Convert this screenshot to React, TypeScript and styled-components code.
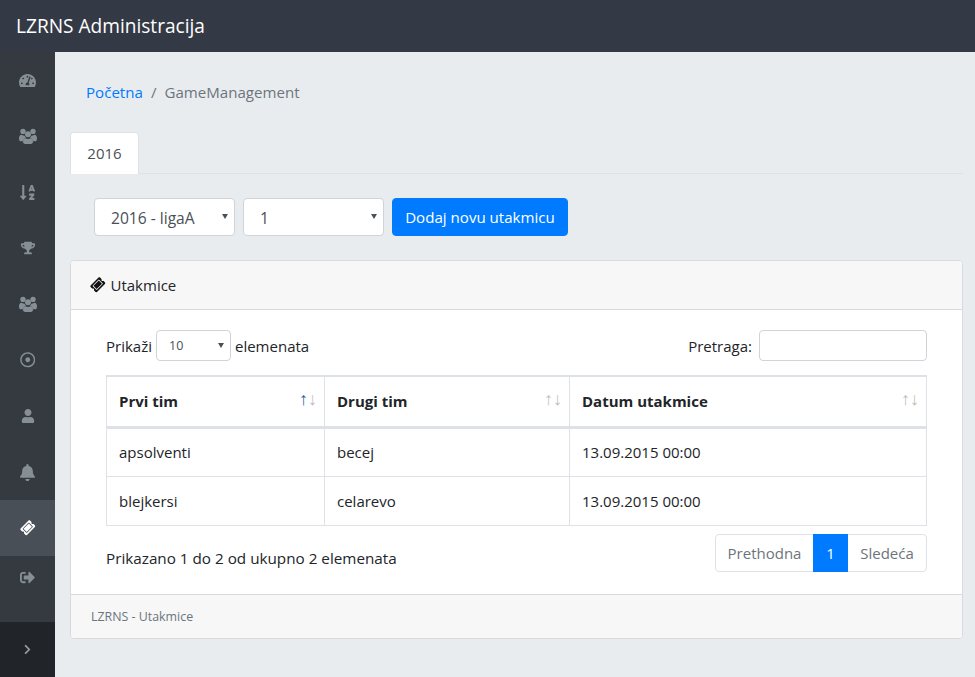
import styled, { createGlobalStyle } from "styled-components";
import {
  FaTachometerAlt,
  FaSortAlphaDown,
  FaTrophy,
  FaRegDotCircle,
  FaUser,
  FaBell,
  FaTicketAlt,
  FaSignOutAlt,
  FaChevronRight,
} from "react-icons/fa";

const GlobalStyle = createGlobalStyle`
  * {
    box-sizing: border-box;
  }
  html, body {
    margin: 0;
    height: 100%;
    background: #e9ecef;
    overflow: hidden;
  }
  body {
    font-family: "Open Sans", "Noto Sans", sans-serif;
    font-size: 15px;
    color: #212529;
  }
`;

const Page = styled.div`
  width: 975px;
  height: 677px;
  display: flex;
  flex-direction: column;
`;

const Header = styled.header`
  height: 52px;
  flex: none;
  background: #343a45;
  color: #fff;
  font-size: 19.1px;
  line-height: 52px;
  padding-left: 16px;
`;

const Body = styled.div`
  flex: 1;
  display: flex;
  min-height: 0;
`;

const Sidebar = styled.nav`
  width: 55px;
  flex: none;
  display: flex;
  flex-direction: column;
  background: #343a40;
`;

const NavList = styled.div`
  flex: 1;
`;

const NavItem = styled.div<{ $active?: boolean; $short?: boolean; $size?: number }>`
  height: ${(p) => (p.$short ? "42px" : "56px")};
  display: flex;
  align-items: center;
  justify-content: center;
  background: ${(p) => (p.$active ? "#494f57" : "transparent")};
  color: ${(p) => (p.$active ? "#fff" : "#868e96")};
  font-size: ${(p) => p.$size ?? 16}px;
`;

const Toggler = styled.div`
  height: 55px;
  flex: none;
  display: flex;
  align-items: center;
  justify-content: center;
  background: #212529;
  color: #949a9f;
  font-size: 11px;
`;

const Main = styled.main`
  flex: 1;
  min-width: 0;
  padding: 0 12px 0 15px;
`;

const Breadcrumb = styled.div`
  height: 80px;
  display: flex;
  align-items: center;
  gap: 8px;
  padding-left: 16px;
  color: #6c757d;
  font-size: 15.1px;
`;

const CrumbLink = styled.a`
  color: #007bff;
`;

const Tabs = styled.div`
  height: 42px;
  border-bottom: 1px solid #dee2e6;
`;

const Tab = styled.div`
  width: 69px;
  height: 42px;
  padding-bottom: 2px;
  display: flex;
  align-items: center;
  justify-content: center;
  background: #fff;
  border: 1px solid #dee2e6;
  border-bottom: 0;
  border-radius: 4px 4px 0 0;
  color: #495057;
`;

const Filters = styled.div`
  display: flex;
  gap: 8px;
  padding: 24px 0 24px 24px;
`;

const SelectWrap = styled.div<{ $small?: boolean }>`
  position: relative;
  width: ${(p) => (p.$small ? "75px" : "141px")};
  height: ${(p) => (p.$small ? "31px" : "38px")};
  &::after {
    content: "";
    position: absolute;
    top: ${(p) => (p.$small ? "13px" : "16px")};
    right: 7px;
    border-left: 3.5px solid transparent;
    border-right: 3.5px solid transparent;
    border-top: 5px solid #495057;
    pointer-events: none;
  }
`;

const Select = styled.select<{ $small?: boolean }>`
  appearance: none;
  width: 100%;
  height: 100%;
  padding: ${(p) => (p.$small ? "0 12px" : "2px 16px 0")};
  background: #fff;
  border: 1px solid #ced4da;
  border-radius: 4px;
  color: #495057;
  font-family: inherit;
  font-size: ${(p) => (p.$small ? "12.5px" : "15.6px")};
`;

const PrimaryButton = styled.button`
  width: 176px;
  height: 38px;
  background: #007bff;
  color: #fff;
  border: 1px solid #007bff;
  border-radius: 4px;
  font-family: inherit;
  font-size: 15.1px;
  padding: 0;
`;

const Card = styled.section`
  width: 893px;
  height: 379px;
  display: flex;
  flex-direction: column;
  background: #fff;
  border: 1px solid #d9dadc;
  border-radius: 4px;
`;

const CardHeader = styled.div`
  height: 49px;
  flex: none;
  display: flex;
  align-items: center;
  gap: 6px;
  padding-left: 20px;
  background: #f7f7f7;
  border-bottom: 1px solid #d9dadc;
  border-radius: 3px 3px 0 0;
`;

const TiltedTicket = styled(FaTicketAlt)`
  transform: rotate(-45deg);
  font-size: 13.5px;
`;

const HeaderIcon = styled.span`
  display: flex;
  color: #111;
`;

const CardBody = styled.div`
  flex: 1;
  padding: 20px 35px 0;
`;

const Controls = styled.div`
  display: flex;
  justify-content: space-between;
  align-items: center;
  height: 31px;
  margin-bottom: 14px;
`;

const LengthLabel = styled.label`
  display: flex;
  align-items: center;
  gap: 4px;
`;

const SearchLabel = styled.label`
  display: flex;
  align-items: center;
  gap: 7px;
`;

const SearchInput = styled.input`
  width: 168px;
  height: 31px;
  border: 1px solid #ced4da;
  border-radius: 4px;
`;

const Table = styled.table`
  width: 820px;
  border-collapse: collapse;
  table-layout: fixed;
`;

const HeadCell = styled.th<{ $width: number }>`
  position: relative;
  width: ${(p) => p.$width}px;
  height: 51px;
  padding: 0 12px;
  text-align: left;
  font-weight: 700;
  border: 1px solid #dee2e6;
  border-top-width: 2px;
  border-bottom-width: 3px;
`;

const SortArrows = styled.span`
  position: absolute;
  right: 7px;
  top: 9px;
  font-size: 18px;
  font-weight: 400;
`;

const Arrow = styled.span<{ $on?: boolean }>`
  color: ${(p) => (p.$on ? "#0b4f9e" : "#212529")};
  opacity: ${(p) => (p.$on ? 0.9 : 0.3)};
`;

const Cell = styled.td`
  height: 49px;
  padding: 0 12px;
  border: 1px solid #dee2e6;
`;

const Footer = styled.div`
  display: flex;
  justify-content: space-between;
  align-items: center;
  margin-top: 8px;
  height: 38px;
`;

const InfoText = styled.span`
  padding-top: 10px;
  font-size: 15.25px;
`;

const Pager = styled.div`
  display: flex;
  height: 38px;
  border: 1px solid #dee2e6;
  border-radius: 4px;
`;

const PageItem = styled.div<{ $active?: boolean; $width: number }>`
  width: ${(p) => p.$width}px;
  display: flex;
  align-items: center;
  justify-content: center;
  color: ${(p) => (p.$active ? "#fff" : "#6c757d")};
  background: ${(p) => (p.$active ? "#007bff" : "transparent")};
  margin: ${(p) => (p.$active ? "-1px 0" : "0")};
`;

const CardFooter = styled.div`
  height: 44px;
  flex: none;
  display: flex;
  align-items: center;
  padding-left: 20px;
  background: #f7f7f7;
  border-top: 1px solid #d9dadc;
  border-radius: 0 0 3px 3px;
  color: #6c757d;
  font-size: 12.4px;
`;

function UsersIcon() {
  return (
    <svg width="18" height="16" viewBox="0 0 18 16" fill="currentColor">
      <circle cx="4" cy="3.4" r="2.7" />
      <circle cx="14" cy="3.4" r="2.7" />
      <circle cx="9" cy="6.2" r="3" />
      <path d="M0 10.2C0 8.1 1 6.8 2.6 6.8c1 .7 2 .9 3 .9.3.9.9 1.6 1.5 2.1-1.7.4-2.8 1.6-3 3.4H1.4C.5 13.2 0 12 0 10.2z" />
      <path d="M18 10.2c0-2.1-1-3.4-2.6-3.4-1 .7-2 .9-3 .9-.3.9-.9 1.6-1.5 2.1 1.7.4 2.8 1.6 3 3.4h2.7c.9 0 1.4-1.2 1.4-3z" />
      <path d="M6.6 10.2c1.4 1 3.4 1 4.8 0 1.6 0 2.6 1.4 2.6 3.3 0 1.6-.8 2.5-2 2.5H6c-1.2 0-2-.9-2-2.5 0-1.9 1-3.3 2.6-3.3z" />
    </svg>
  );
}

const navItems = [
  { icon: <FaTachometerAlt />, size: 17 },
  { icon: <UsersIcon />, size: 16 },
  { icon: <FaSortAlphaDown />, size: 17 },
  { icon: <FaTrophy />, size: 14 },
  { icon: <UsersIcon />, size: 16 },
  { icon: <FaRegDotCircle />, size: 15.5 },
  { icon: <FaUser />, size: 14 },
  { icon: <FaBell />, size: 17 },
];

const games = [
  { first: "apsolventi", second: "becej", date: "13.09.2015 00:00" },
  { first: "blejkersi", second: "celarevo", date: "13.09.2015 00:00" },
];

export default function App() {
  return (
    <Page>
      <GlobalStyle />
      <Header>LZRNS Administracija</Header>
      <Body>
        <Sidebar>
          <NavList>
            {navItems.map((item, i) => (
              <NavItem key={i} $size={item.size}>
                {item.icon}
              </NavItem>
            ))}
            <NavItem $active $size={13.5}>
              <TiltedTicket />
            </NavItem>
            <NavItem $short $size={15}>
              <FaSignOutAlt />
            </NavItem>
          </NavList>
          <Toggler>
            <FaChevronRight />
          </Toggler>
        </Sidebar>
        <Main>
          <Breadcrumb>
            <CrumbLink>Početna</CrumbLink>
            <span>/</span>
            <span>GameManagement</span>
          </Breadcrumb>
          <Tabs>
            <Tab>2016</Tab>
          </Tabs>
          <Filters>
            <SelectWrap>
              <Select defaultValue="2016 - ligaA">
                <option>2016 - ligaA</option>
              </Select>
            </SelectWrap>
            <SelectWrap>
              <Select defaultValue="1">
                <option>1</option>
              </Select>
            </SelectWrap>
            <PrimaryButton>Dodaj novu utakmicu</PrimaryButton>
          </Filters>
          <Card>
            <CardHeader>
              <HeaderIcon>
                <TiltedTicket />
              </HeaderIcon>
              Utakmice
            </CardHeader>
            <CardBody>
              <Controls>
                <LengthLabel>
                  Prikaži
                  <SelectWrap $small>
                    <Select $small defaultValue="10">
                      <option>10</option>
                    </Select>
                  </SelectWrap>
                  elemenata
                </LengthLabel>
                <SearchLabel>
                  Pretraga:
                  <SearchInput />
                </SearchLabel>
              </Controls>
              <Table>
                <thead>
                  <tr>
                    <HeadCell $width={218}>
                      Prvi tim
                      <SortArrows>
                        <Arrow $on>↑</Arrow>
                        <Arrow>↓</Arrow>
                      </SortArrows>
                    </HeadCell>
                    <HeadCell $width={245}>
                      Drugi tim
                      <SortArrows>
                        <Arrow>↑</Arrow>
                        <Arrow>↓</Arrow>
                      </SortArrows>
                    </HeadCell>
                    <HeadCell $width={357}>
                      Datum utakmice
                      <SortArrows>
                        <Arrow>↑</Arrow>
                        <Arrow>↓</Arrow>
                      </SortArrows>
                    </HeadCell>
                  </tr>
                </thead>
                <tbody>
                  {games.map((g) => (
                    <tr key={g.first}>
                      <Cell>{g.first}</Cell>
                      <Cell>{g.second}</Cell>
                      <Cell>{g.date}</Cell>
                    </tr>
                  ))}
                </tbody>
              </Table>
              <Footer>
                <InfoText>Prikazano 1 do 2 od ukupno 2 elemenata</InfoText>
                <Pager>
                  <PageItem $width={97}>Prethodna</PageItem>
                  <PageItem $active $width={35}>
                    1
                  </PageItem>
                  <PageItem $width={78}>Sledeća</PageItem>
                </Pager>
              </Footer>
            </CardBody>
            <CardFooter>LZRNS - Utakmice</CardFooter>
          </Card>
        </Main>
      </Body>
    </Page>
  );
}
